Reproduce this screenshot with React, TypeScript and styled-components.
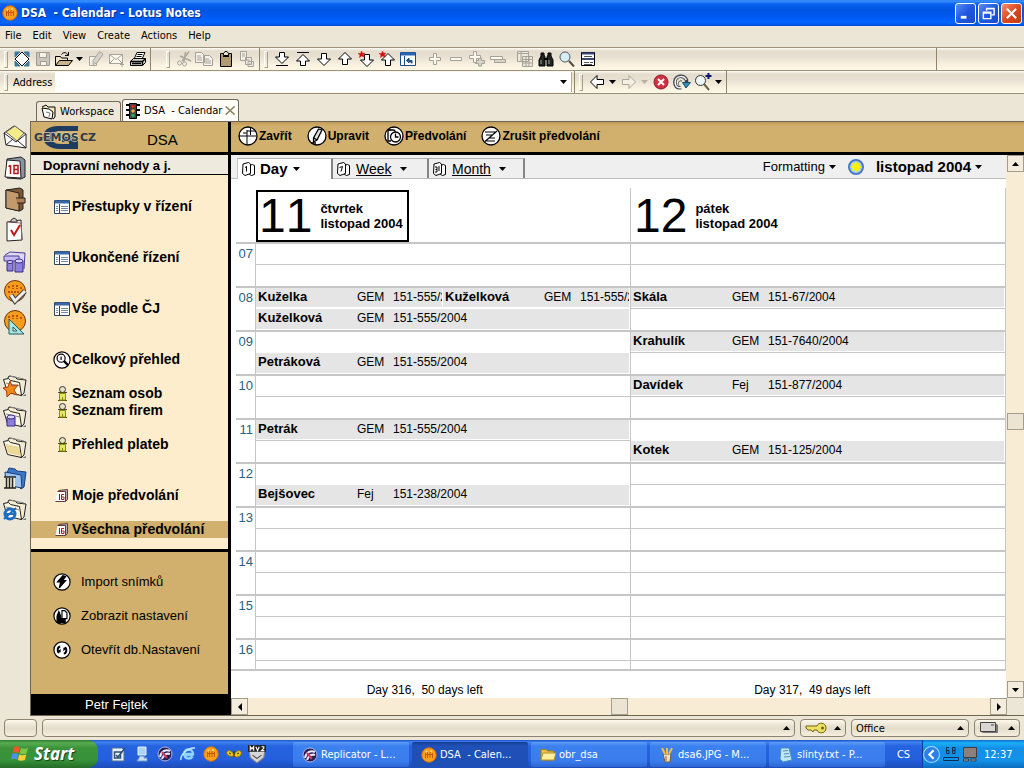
import React from "react";
import styled, { createGlobalStyle, css } from "styled-components";

const ui = `"DejaVu Sans Condensed", "Liberation Sans", sans-serif`;
const doc = `"Liberation Sans", Arial, sans-serif`;
const line = "#c6c6c6";
const tan = "#d1af6c";
const face = "#ece6d6";

const Global = createGlobalStyle`
  *, *::before, *::after { box-sizing: border-box; }
  body { margin: 0; background: ${face}; color: #000; font: 11px ${ui}; }
  button { border: 0; padding: 0; margin: 0; background: none; color: inherit; font: inherit; }
  a { color: inherit; text-decoration: none; }
  ul { list-style: none; margin: 0; padding: 0; }
  svg { display: block; flex: none; }
`;

const Shell = styled.div`
  display: flex;
  flex-direction: column;
  height: 100vh;
  overflow: hidden;
  white-space: pre;
`;

/* ---------- title bar and menu ---------- */

const TitleBar = styled.header`
  display: flex;
  align-items: center;
  flex: none;
  height: 26px;
  padding: 0 2px;
  gap: 3px;
  color: #fff;
  background: linear-gradient(#2a7df5 0, #3a92ff 1px, #0a63ee 4px, #0054e3 10px, #0058f0 16px, #0066ff 22px, #0050e0 26px);
`;
const Title = styled.h1`
  flex: 1;
  margin: 0;
  font: bold 12px/20px "DejaVu Sans Condensed", sans-serif;
  text-shadow: 1px 1px 0 #0a2f8c;
`;
const WindowButton = styled.button<{ $close?: boolean }>`
  display: grid;
  place-items: center;
  width: 21px;
  height: 21px;
  border: 1px solid #fff;
  border-radius: 3px;
  background: ${(p) => (p.$close ? "linear-gradient(135deg, #f09070, #dc4a20 50%, #c23a10)" : "linear-gradient(135deg, #5b8cf5, #2058e0 50%, #1a4acb)")};
`;
const WindowButtons = styled.div`
  display: flex;
  gap: 2px;
`;
const Menu = styled.nav`
  display: flex;
  align-items: center;
  flex: none;
  height: 21px;
  gap: 11px;
  padding: 0 5px 2px;
`;

/* ---------- toolbars ---------- */

const Bar = styled.div`
  display: flex;
  flex: none;
  height: 23px;
  border-top: 1px solid #9b917c;
  background: linear-gradient(#fffdf5 0, #e4dccd 3px, #e8e1d2 9px, #fbf4e2 18px, #fdf7e6);
`;
const BarGroup = styled.div<{ $lead?: number; $grow?: boolean }>`
  display: flex;
  align-items: center;
  flex: ${(p) => (p.$grow ? "1" : "none")};
  padding-left: ${(p) => p.$lead ?? 4}px;
  padding-right: 2px;
  border-right: 1px solid #8f8468;
`;
const Grip = styled.i`
  width: 4px;
  height: 17px;
  margin-right: 3px;
  border: 1px solid;
  border-color: #fff #a99f88 #a99f88 #fff;
`;
const ToolButton = styled.button<{ $narrow?: boolean }>`
  display: grid;
  place-items: center;
  flex: none;
  width: ${(p) => (p.$narrow ? 11 : 21)}px;
  height: 21px;
`;
const Gap = styled.i`
  flex: none;
  width: 6px;
`;
const BarEnd = styled.div`
  flex: none;
  width: 87px;
`;
const AddressGroup = styled(BarGroup)`
  flex: 0 1 575px;
`;
const AddressLabel = styled.label`
  padding: 0 3px 0 2px;
`;
const AddressInput = styled.input`
  flex: 1;
  min-width: 0;
  height: 20px;
  border: 0;
  padding: 0 4px;
  background: #fff;
  font: 11px ${ui};
`;
const AddressDrop = styled.button`
  display: grid;
  place-items: center;
  width: 17px;
  height: 20px;
  background: #fff;
  border-right: 1px solid #b9ae94;
`;

/* ---------- window tabs ---------- */

const Tabs = styled.div`
  display: flex;
  align-items: flex-end;
  flex: none;
  height: 28px;
  padding-left: 36px;
  border-top: 1px solid #9b917c;
  gap: 1px;
`;
const Tab = styled.button<{ $on?: boolean }>`
  display: flex;
  align-items: center;
  gap: 3px;
  height: ${(p) => (p.$on ? 22 : 20)}px;
  padding: ${(p) => (p.$on ? "0 2px" : "0 6px 0 4px")};
  border: 1px solid #6f6a5e;
  border-bottom: 0;
  border-radius: 3px 3px 0 0;
  background: ${(p) => (p.$on ? "#fffdf8" : "#efe8d8")};
`;

/* ---------- body ---------- */

const Body = styled.div`
  display: flex;
  flex: 1;
  min-height: 0;
`;
const Bookmarks = styled.nav`
  display: flex;
  flex-direction: column;
  flex: none;
  width: 30px;
`;
const Bookmark = styled.button<{ $apart?: boolean }>`
  display: grid;
  place-items: center;
  flex: none;
  width: 29px;
  height: 31px;
  margin-top: ${(p) => (p.$apart ? 31 : 0)}px;
`;
const Frame = styled.div`
  display: flex;
  flex: 1;
  min-width: 0;
  border: 1px solid #6f664f;
  border-right: 0;
  font-family: ${doc};
`;

/* ---------- navigator ---------- */

const Navigator = styled.aside`
  display: flex;
  flex-direction: column;
  flex: none;
  width: 200px;
  border-right: 3px solid #000;
  background: #feedcd;
`;
const Brand = styled.div`
  display: flex;
  align-items: center;
  gap: 48px;
  flex: none;
  height: 33px;
  padding-left: 3px;
  border-bottom: 3px solid #000;
  background: ${tan};
  font-size: 15px;
`;
const BrandName = styled.span`
  padding-top: 5px;
`;
const NavTitle = styled.h2`
  flex: none;
  height: 20px;
  margin: 0;
  padding-left: 12px;
  border-bottom: 1px solid #000;
  background: #eeeade;
  font: bold 13px/21px ${doc};
`;
const NavList = styled.ul`
  flex: 1;
  padding-top: 23px;
`;
const NavItem = styled.li<{ $skip: number; $on?: boolean }>`
  height: 17px;
  margin-top: ${(p) => p.$skip * 17}px;
  background: ${(p) => (p.$on ? tan : "transparent")};
`;
const NavLink = styled.a<{ $plain?: boolean }>`
  display: flex;
  align-items: center;
  gap: ${(p) => (p.$plain ? 10 : 1)}px;
  height: 17px;
  padding-left: 22px;
  font: ${(p) => (p.$plain ? "13px" : "bold 14px")}/17px ${doc};
`;
const NavIcon = styled.span`
  display: grid;
  place-items: center;
  width: 18px;
`;
const Tools = styled.ul`
  display: flex;
  flex-direction: column;
  flex: none;
  gap: 17px;
  height: 145px;
  padding-top: 21px;
  border-top: 3px solid #000;
  background: ${tan};
`;
const User = styled.div`
  flex: none;
  height: 21px;
  padding-left: 54px;
  background: #000;
  color: #fff;
  font: 13px/22px ${doc};
`;

/* ---------- calendar ---------- */

const Calendar = styled.main`
  display: flex;
  flex-direction: column;
  flex: 1;
  min-width: 0;
  background: #fff;
`;
const Actions = styled.div`
  display: flex;
  align-items: center;
  flex: none;
  gap: 15px;
  height: 33px;
  padding: 0 7px 3px;
  border-bottom: 3px solid #000;
  background: linear-gradient(#c09a58, ${tan} 4px);
`;
const Action = styled.button`
  display: flex;
  align-items: center;
  gap: 1px;
  font: bold 12px/16px ${doc};
`;
const Scrolled = styled.div`
  display: flex;
  flex: 1;
  min-height: 0;
`;
const View = styled.div`
  display: flex;
  flex-direction: column;
  flex: 1;
  min-width: 0;
`;
const ViewBar = styled.div`
  display: flex;
  flex: none;
  height: 24px;
  padding: 3px 24px 0 6px;
  border-bottom: 1px solid #bdbdbd;
  background: #efefef;
  font-size: 14px;
`;
const ViewTab = styled.button<{ $on?: boolean }>`
  display: flex;
  align-items: center;
  gap: 6px;
  width: 96px;
  padding-left: 4px;
  border-top: 1px solid #b0b0b0;
  border-right: 2px solid #858585;
  font: ${(p) => (p.$on ? "bold 15px" : "14px")}/20px ${doc};
  ${(p) =>
    p.$on
      ? css`
          gap: 5px;
          height: 21px;
          border-left: 1px solid #c6c6c6;
          background: #fff;
        `
      : css`
          span { text-decoration: underline; margin-right: 2px; }
        `}
`;
const ViewSpace = styled.div`
  flex: 1;
`;
const ViewMenu = styled.button<{ $bold?: boolean }>`
  display: flex;
  align-items: center;
  gap: 4px;
  height: 18px;
  margin-left: 12px;
  font: ${(p) => (p.$bold ? "bold 15px" : "13px")}/18px ${doc};
`;
const Days = styled.div`
  display: flex;
  flex: 1;
  min-height: 0;
  padding-left: 5px;
  border-bottom: 2px solid ${line};
`;
const Hours = styled.div`
  flex: none;
  width: 20px;
  padding-top: 63px;
  overflow: hidden;
`;
const Hour = styled.div`
  height: 44px;
  border-top: 2px solid ${line};
  border-right: 1px solid ${line};
  color: #2d5f80;
  text-align: right;
  padding-right: 2px;
  font: 13px/19px ${doc};
`;
const Day = styled.section`
  display: flex;
  flex-direction: column;
  flex: 1;
  min-width: 0;
  overflow: hidden;
`;
const DayHead = styled.div`
  flex: none;
  height: 54px;
  margin-top: 9px;
  padding-top: 2px;
  border-right: 1px solid ${line};
`;
const DayBox = styled.div<{ $today?: boolean }>`
  display: inline-flex;
  align-items: center;
  gap: 8px;
  height: 52px;
  padding: 0 4px 0 1px;
  border: 2px solid ${(p) => (p.$today ? "#000" : "transparent")};
`;
const DayNumber = styled.span`
  font: 48px/48px ${doc};
  font-kerning: none;
`;
const DayName = styled.span`
  font: bold 13px/15px ${doc};
`;
const Slots = styled.div`
  flex: 1;
  min-height: 0;
  overflow: hidden;
  border-right: 1px solid ${line};
`;
const Slot = styled.div<{ $half: boolean; $busy: boolean }>`
  display: flex;
  height: 22px;
  border-top: ${(p) => (p.$half ? 1 : 2)}px solid ${(p) => (p.$half && p.$busy ? "#fff" : line)};
  padding-bottom: 1px;
`;
const Entry = styled.a`
  display: grid;
  grid-template-columns: 99px 36px 1fr;
  flex: 1 1 0;
  min-width: 0;
  margin-right: 1px;
  padding-left: 2px;
  overflow: hidden;
  background: #e5e5e5;
  font: 12px/18px ${doc};
  b { font-size: 13px; }
`;
const Counts = styled.div`
  display: flex;
  flex: none;
  height: 27px;
  padding-top: 7px;
  text-align: center;
  font: 12px/24px ${doc};
`;
const Count = styled.div`
  flex: 1;
`;

/* ---------- scroll bars ---------- */

const Track = styled.div<{ $row?: boolean }>`
  display: flex;
  flex: none;
  flex-direction: ${(p) => (p.$row ? "row" : "column")};
  ${(p) => (p.$row ? "height: 17px; padding-right: 17px;" : "width: 18px; padding-left: 1px;")}
  background: ${(p) => (p.$row ? `linear-gradient(${face}, ${face}) right / 18px 100% no-repeat,` : "")} #f9ecd4;
`;
const ScrollButton = styled.button`
  display: grid;
  place-items: center;
  flex: none;
  width: 17px;
  height: 17px;
  border: 1px solid #a39d8c;
  background: #f4ecdc;
`;
const Thumb = styled.div`
  flex: none;
  width: 17px;
  height: 17px;
  border: 1px solid #a39d8c;
  background: #ebe4d3;
`;
const Run = styled.div<{ $share?: number }>`
  flex: ${(p) => p.$share ?? 25} 1 0;
`;

/* ---------- status bar ---------- */

const Status = styled.footer`
  display: flex;
  align-items: center;
  flex: none;
  gap: 5px;
  height: 24px;
  padding: 0 4px;
`;
const StatusBox = styled.button<{ $w?: number }>`
  display: flex;
  align-items: center;
  justify-content: space-between;
  ${(p) => (p.$w ? `flex: none; width: ${p.$w}px;` : "flex: 1;")}
  height: 18px;
  padding: 0 4px;
  border: 1px solid #8d8370;
  border-radius: 4px;
  background: linear-gradient(#fdf8ea, #e3dbcb 50%, #f7efde);
`;

/* ---------- task bar ---------- */

const TaskBar = styled.footer`
  display: flex;
  flex: none;
  height: 28px;
  color: #fff;
  background: linear-gradient(#1c4fc4 0, #3f83f2 2px, #2663e0 6px, #245edb 20px, #1c4cb8 28px);
`;
const Start = styled.button`
  display: flex;
  align-items: center;
  gap: 5px;
  width: 98px;
  padding-left: 11px;
  border-radius: 0 10px 10px 0;
  background: linear-gradient(#2f7d2e 0, #58ac52 3px, #3b9339 8px, #37923a 20px, #256c28 28px);
  font: italic bold 17px/24px "Noto Sans", sans-serif;
  text-shadow: 1px 1px 1px #1b3f19;
`;
const Quick = styled.div`
  display: flex;
  align-items: center;
  width: 195px;
  padding-left: 9px;
`;
const QuickButton = styled.button`
  display: grid;
  place-items: center;
  width: 23px;
  height: 24px;
`;
const Tasks = styled.div`
  display: flex;
  flex: 1;
  min-width: 0;
  gap: 3px;
  padding: 2px 0 1px;
`;
const Task = styled.button<{ $on?: boolean }>`
  display: flex;
  align-items: center;
  gap: 3px;
  flex: 1 1 0;
  min-width: 0;
  padding-left: 9px;
  border-radius: 2px;
  overflow: hidden;
  background: ${(p) => (p.$on ? "linear-gradient(#153e94, #1e50b8 4px, #1d4fb5)" : "linear-gradient(#5f9cfa, #3c81f0 4px, #3a7cec 19px, #2c66d4)")};
`;
const Lang = styled.button`
  width: 37px;
`;
const Tray = styled.div`
  display: flex;
  align-items: center;
  gap: 3px;
  width: 102px;
  border-left: 1px solid #0b3f9c;
  background: linear-gradient(#0d6fd0, #19b0f5 3px, #1290e8 8px, #1392ea 20px, #0c6cc0);
`;
const Clock = styled.time`
  padding-left: 3px;
`;

/* ---------- drawings ---------- */

type Kids = { children: React.ReactNode; s?: number; v?: number };
const Pic = ({ children, s = 16, v = 16 }: Kids) => (
  <svg width={s} height={s} viewBox={`0 0 ${v} ${v}`} fill="none" stroke="#000" strokeWidth="1" aria-hidden="true">
    {children}
  </svg>
);
const Caret = ({ c = "#000", up }: { c?: string; up?: boolean }) => (
  <svg width="7" height="4" viewBox="0 0 7 4" fill={c} aria-hidden="true">
    <path d={up ? "M0 4 3.5 0 7 4z" : "M0 0h7L3.5 4z"} />
  </svg>
);
const Side = ({ left }: { left?: boolean }) => (
  <svg width="4" height="8" viewBox="0 0 4 8" aria-hidden="true">
    <path d={left ? "M4 0v8L0 4z" : "M0 0v8l4-4z"} />
  </svg>
);

const Notes = ({ s = 16 }: { s?: number }) => (
  <Pic s={s}>
    <circle cx="8" cy="8" r="7.2" fill="#f9a01c" stroke="#d9720c" />
    <path d="M4.5 6v5M6.5 5v6M9 5v6M11.5 6v5M4 7.5h8" stroke="#c8580a" />
    <circle cx="5.5" cy="4.5" r="1" fill="#ffd878" stroke="none" />
    <circle cx="10" cy="4" r="1" fill="#ffd878" stroke="none" />
  </Pic>
);

const arrowDown = "M5.5 2.5h5v5.5h4L8 14.5 1.500 8h4z";
const arrowUp = "M5.5 13.5h5V8h4L8 1.500 1.500 8h4z";
const star = <path d="m3.5 0 1 2.200L7 2 5.300 3.800 6.500 6 3.700 5 1.500 6.500 2 4 0 2.500h2.600z" fill="#d01010" stroke="#d01010" strokeWidth="0.5" />;

const icons: Record<string, React.ReactNode> = {
  diamond: (
    <Pic>
      <path d="M1 1h5L1 6zM15 1v5l-5-5zM1 15v-5l5 5zM15 15h-5l5-5z" fill="#3f7ca0" stroke="#3f7ca0" />
      <path d="M8 1 15 8 8 15 1 8z" fill="#fff" />
    </Pic>
  ),
  save: (
    <Pic>
      <path d="M1.5 1.5h13v13h-13z" fill="#c9c5bd" stroke="#a09c94" />
      <path d="M4.5 1.5h7v5h-7zM5.5 10.5h6v4h-6z" fill="#f6f2ea" stroke="#a09c94" />
    </Pic>
  ),
  open: (
    <svg width="20" height="16" viewBox="0 0 20 16" fill="none" stroke="#000" aria-hidden="true">
      <path d="M1.5 14.5v-9h5l1 1.5h6v3" fill="#f2e6c4" />
      <path d="M1.5 14.5 5.5 9.5h13l-4 5z" fill="#cbb48c" />
      <path d="M7.5 3.5c2-3 5-2 6.5.5M14.5 1v3.5h-3.5" />
    </svg>
  ),
  edit: (
    <Pic>
      <path d="M1.5 5.5h7v9h-7z" fill="#f7f3ea" stroke="#a8a49a" />
      <path d="M11.5.5 15 3l-6 9-4 1.500 0-4z" fill="#d5d1c8" stroke="#a8a49a" />
    </Pic>
  ),
  mail: (
    <Pic>
      <path d="M.5 3.5h13v9H.5z" fill="#fbf7ee" stroke="#a8a49a" />
      <path d="m.5 3.5 6.5 5 6.5-5M.5 12.5 5 8M13.5 12.5 9 8M11 13.5h4M13 11v5" stroke="#a8a49a" />
    </Pic>
  ),
  print: (
    <svg width="18" height="16" viewBox="0 0 18 16" fill="none" stroke="#000" aria-hidden="true">
      <path d="M5.5 7 8 1.5h8L13.5 7" fill="#fff" />
      <path d="M8.5 3.5h5M7.5 5.5h5" />
      <path d="M1.5 10.5 4.5 7.5h12v4l-3 3h-12z" fill="#d8d4c8" />
      <path d="M1.5 10.5h12v4M13.5 10.5l3-3M3 12.5h9" strokeWidth="1.5" />
    </svg>
  ),
  cut: (
    <Pic>
      <path d="M13 .5 6 10M4 5l11 5M9.5 1 8 11" stroke="#aaa69c" strokeWidth="1.5" />
      <circle cx="3.5" cy="12" r="2" stroke="#aaa69c" />
      <circle cx="8.5" cy="13" r="2" stroke="#aaa69c" />
    </Pic>
  ),
  copy: (
    <svg width="19" height="16" viewBox="0 0 19 16" fill="#f7f3ea" stroke="#a5a198" aria-hidden="true">
      <path d="M.5 1.5h6l3 3v7h-9zM8.5 4.5h6l3 3v7h-9z" />
      <path d="M2 5h4M2 7h5M2 9h5M10 8h4M10 10h6M10 12h6" />
    </svg>
  ),
  paste: (
    <Pic>
      <path d="M2.5 2.5h11v13h-11z" fill="#b09a74" />
      <path d="M5.5 4.5v-2l1.5-2h2l1.5 2v2z" fill="#e8e2d2" />
      <path d="M5 5.5h6" />
    </Pic>
  ),
  special: (
    <Pic>
      <path d="M1.5.5h6v9h-6zM6.5 6.5h6v7h-6zM9 10.5h5.5v5H9z" fill="#f2eee5" stroke="#a5a198" />
      <path d="M3 3h3M3 5h3M8 9h3M10 13h3" stroke="#a5a198" />
    </Pic>
  ),
  downEnd: <Pic><path d="M5.5 1.5h5V6h4L8 12.5 1.500 6h4z" fill="#fff" /><path d="M2 14.5h12" /></Pic>,
  upEnd: <Pic><path d="M5.5 14.5h5V10h4L8 3.500 1.500 10h4z" fill="#fff" /><path d="M2 1.5h12" /></Pic>,
  down: <Pic><path d={arrowDown} fill="#fff" /></Pic>,
  up: <Pic><path d={arrowUp} fill="#fff" /></Pic>,
  starDown: <Pic><g transform="translate(1 1)"><path d={arrowDown} fill="#fff" /></g>{star}</Pic>,
  starUp: <Pic><g transform="translate(1 1)"><path d={arrowUp} fill="#fff" /></g>{star}</Pic>,
  parent: (
    <Pic>
      <path d="M.5 1.5h15v13H.5z" fill="#fff" stroke="#1c4c8c" />
      <path d="M1 3h14" stroke="#2a66b0" strokeWidth="3" />
      <path d="M4.5 5v9" stroke="#1c4c8c" />
      <path d="M7 9.5h5v3M9 7 6.5 9.5 9 12z" fill="#1c4c8c" stroke="#1c4c8c" />
    </Pic>
  ),
  plus: <Pic><path d="M6.5 2.5h3v4h4v3h-4v4h-3v-4h-4v-3h4z" fill="#fffaf0" stroke="#a5a198" /></Pic>,
  minus: <Pic><path d="M2.5 6.5h11v3h-11z" fill="#fffaf0" stroke="#a5a198" /></Pic>,
  plusAll: (
    <Pic>
      <path d="M9.5 7v2.5h-3v3h3V15h3v-2.5h3v-3h-3V7z" fill="#d9d4c8" stroke="#a5a198" />
      <path d="M4.5.5h3v4h4v3h-4v4h-3v-4h-4v-3h4z" fill="#fffaf0" stroke="#a5a198" />
    </Pic>
  ),
  minusAll: (
    <Pic>
      <path d="M4.5 8.5h11v3h-11z" fill="#d9d4c8" stroke="#a5a198" />
      <path d="M.5 5.5h12v3H.5z" fill="#fffaf0" stroke="#a5a198" />
    </Pic>
  ),
  grid: (
    <Pic>
      <path d="M.5.5h11v10H.5zM5.5 5.5h10v10h-10z" fill="#efe9dc" stroke="#a5a198" />
      <path d="M.5 2.5h11M4 1v9M5.5 8.5h10M9 6v9M12 6v9M6 12h9" stroke="#a5a198" />
    </Pic>
  ),
  find: (
    <Pic>
      <path d="M3 2h3v2l1 2v9H1V9l2-4zM10 2h3v3l2 4v6H9V6l1-2z" fill="#222" />
      <path d="M6 8h4" strokeWidth="2" />
      <path d="M3 9v4M11 9v4" stroke="#8fae8f" />
    </Pic>
  ),
  lens: (
    <Pic>
      <circle cx="6" cy="6" r="5" fill="#d8ecf4" stroke="#4c5c68" />
      <path d="m10 10 5 5.5" stroke="#554c38" strokeWidth="2" />
    </Pic>
  ),
  form: (
    <Pic>
      <path d="M1.5 1.5h13v13h-13z" fill="#fff" />
      <path d="M2 2.500h12M2 8h12" stroke="#3a4a80" strokeWidth="2" />
      <path d="M4 5.5h8M4 11.500h5M10 11.500h3M4 13.500h8" stroke="#555" />
    </Pic>
  ),
  back: <Pic><path d="M1.5 8 8 1.5v4h6.500v5H8v4z" fill="#fff" /></Pic>,
  forward: <Pic><path d="M14.5 8 8 1.5v4H1.500v5H8v4z" fill="#f4f0e4" stroke="#aaa69a" /></Pic>,
  stop: <Pic><circle cx="8" cy="8" r="7" fill="#d03040" stroke="#8c1c2c" /><path d="m5 5 6 6M11 5l-6 6" stroke="#fff" strokeWidth="2" /></Pic>,
  reload: (
    <svg width="18" height="16" viewBox="0 0 18 16" fill="none" aria-hidden="true">
      <path d="M8 13.5C3.5 15 1.5 11 2 7.5 3 1 11 .5 13.5 6v3" stroke="#39424c" strokeWidth="3.5" />
      <path d="M8 13.5C3.5 14.5 1.7 11 2.2 7.5 3 1.5 11 1 13.3 6" stroke="#f4f4f4" strokeWidth="1.5" />
      <path d="M9.5 8.5h8L13 14z" fill="#2e8fc0" stroke="#1c4c6c" />
      <path d="M6 11.5C4.5 9 6 6 9 7" stroke="#555" />
    </svg>
  ),
  searchPlus: (
    <svg width="18" height="18" viewBox="0 0 18 18" fill="none" aria-hidden="true">
      <circle cx="6.5" cy="7.5" r="5" fill="#eef6f8" stroke="#333" />
      <path d="m10 11 5 6" stroke="#6b6248" strokeWidth="2" />
      <path d="M14.5 0v6M11.5 3h6" stroke="#101070" strokeWidth="2" />
    </svg>
  ),
};

const folderBack = (
  <g>
    <path d="M5 8 7 4l6 1 2 2 9 1-2 13-3 3z" fill="#f4ecd0" stroke="#222" />
    <path d="m1.5 7.5 5-1 2 2 9 2 2 13-14-3z" fill="#fdf8e4" stroke="#222" />
    <path d="m4 11 14 3M8 4l14 3" stroke="#888" />
    <path d="m20 24 4-2v2z" fill="#777" stroke="none" />
  </g>
);
const marks: { name: string; apart?: boolean; pic: React.ReactNode }[] = [
  { name: "Mail", pic: <><path d="M2 9 12 2l12 8v14L4 21z" fill="#fff" stroke="#222" /><path d="m4 8 9-6 9 7-7 8z" fill="#f3ec88" stroke="#666" /><path d="m2 9 12 9 10-8M4 21l7-6M24 24l-8-7" stroke="#222" /></> },
  { name: "Calendar", pic: <><path d="m5 4 14-2 4 3v17l-4 2-14-1z" fill="#8a94a0" stroke="#222" /><path d="m5 5 13 1 1 17-16-1z" fill="#fff" stroke="#222" /><path d="M8.500 10v9M6.500 11.500l2-1M12 10.500h4v8h-4zM12 14.500h4" stroke="#b01818" strokeWidth="1.5" /></> },
  { name: "Address book", pic: <><path d="m4 4 14-2 3 2v19l-3 2-14-3z" fill="#7c5a38" stroke="#222" /><path d="m4 4 13 3v18L4 22z" fill="#c49a6c" stroke="#222" /><path d="M14 12h9v5h-8" fill="#b08050" stroke="#222" /></> },
  { name: "To do", pic: <><path d="m5 5 14-2 1 20-15 1z" fill="#fff" stroke="#222" /><path d="m5 5 14 1 1 17" stroke="#a06060" /><path d="M9 5V3l3-2 3 2v2z" fill="#c8c8c8" stroke="#333" /><path d="m9 13 3 5 6-10" stroke="#c01818" strokeWidth="2" /></> },
  { name: "Databases", pic: <><path d="M3 7 8 4l15 1-1 16" fill="#ddd8f4" stroke="#4c3c98" /><path d="M2 8h15v5H2z" fill="#c4bcf0" stroke="#4c3c98" /><path d="M5 14h6v9H5zM13 13h8v11h-8z" fill="#8c80dc" stroke="#3a2c88" /><ellipse cx="8" cy="14" rx="3" ry="1.5" fill="#d8d0f8" stroke="#3a2c88" /><ellipse cx="17" cy="13" rx="4" ry="2" fill="#d8d0f8" stroke="#3a2c88" /></> },
  { name: "Administrator", pic: <><circle cx="13" cy="12" r="10.5" fill="#f79c1c" stroke="#6c3408" /><path d="M7 7v3M11 6v4M15 6v4M19 8v3M6 13h12" stroke="#b85408" strokeWidth="2" strokeDasharray="2 1" /><path d="m9 16 4 6L23 12" stroke="#444" strokeWidth="5" /><path d="m9 16 4 6L23 12" stroke="#eee" strokeWidth="3" /></> },
  { name: "Designer", pic: <><circle cx="13" cy="11" r="10.5" fill="#f79c1c" stroke="#6c3408" /><path d="M7 6v3M11 5v4M15 5v4M19 7v3" stroke="#b85408" strokeWidth="2" strokeDasharray="2 1" /><path d="M7 9v15h15z" fill="#a8e4dc" stroke="#1c5c5c" /><path d="M11 17v4h4z" fill="#fff" stroke="#1c5c5c" /></> },
  { name: "Favorites", apart: true, pic: <>{folderBack}<path d="m8 9 2 5 6-1-4 5 3 5-6-2-4 4-.5-6L1 16l5-1z" fill="#f08a1c" stroke="#b03c08" /></> },
  { name: "Database folder", pic: <>{folderBack}<path d="M5 14h8v9H5z" fill="#8c80dc" stroke="#3a2c88" /><ellipse cx="9" cy="14" rx="4" ry="2" fill="#d8d0f8" stroke="#3a2c88" /></> },
  { name: "More bookmarks", pic: <>{folderBack}<path d="m3 10 14 3 2 9-13-3z" fill="#ecd898" stroke="none" /></> },
  { name: "History", pic: <><path d="M5 8 7 3l6 1 2 2 9 1-2 15-3 2z" fill="#3c78c8" stroke="#1c3c78" /><path d="m3 7 16 3 1 13-16-3z" fill="#9cc4f0" stroke="#1c3c78" /><path d="M3 12h10v11H3z" fill="#f4ecd8" stroke="none" /><path d="M2 12h12M2 23h12M4.5 13v10M7.5 13v10M10.5 13v10" stroke="#222" strokeWidth="1.5" /></> },
  { name: "Internet Explorer", pic: <>{folderBack}<circle cx="8" cy="18" r="5" fill="#fff" stroke="#1c6cc0" strokeWidth="3" /><path d="M4 18h9M2 23 14 12" stroke="#1c6cc0" strokeWidth="2" /></> },
];

const ListIcon = () => (
  <svg width="16" height="14" viewBox="0 0 16 14" fill="none" aria-hidden="true">
    <path d="M.5.5h15v13H.5z" fill="#fff" stroke="#2c4460" />
    <path d="M1 2h14" stroke="#3868a8" strokeWidth="3" />
    <path d="M5.5 4v9" stroke="#2c4460" />
    <path d="M2 6.500h2M2 8.500h2M2 10.500h2M7 6.500h7M7 8.500h7M7 10.500h7" stroke="#7888a0" />
  </svg>
);
const Person = () => (
  <svg width="11" height="15" viewBox="0 0 11 15" fill="none" stroke="#4c4c10" aria-hidden="true">
    <circle cx="5.5" cy="3.5" r="3" fill="#e8e4c0" stroke="#333" />
    <path d="M1 6.5h9M1 14.5h9" />
    <path d="M2.5 7.5h6v6.5h-6z" fill="#e4e860" stroke="#8c8c10" />
    <path d="M5.500 11v3" stroke="#8c8c10" />
  </svg>
);
const Cal16 = () => (
  <svg width="14" height="13" viewBox="0 0 14 13" fill="none" aria-hidden="true">
    <path d="M3.5 1.5 12.500.5v10l-2 2" fill="#b8a8a8" stroke="#5c3c3c" />
    <path d="M2.5 2.5h8v10H.5" fill="#fff" stroke="#5c3c3c" />
    <path d="M4.5 5v6M9 5.500H6.500V10.500H9V8H6.500" stroke="#b01818" />
  </svg>
);
const Round = ({ children, s = 18 }: { children: React.ReactNode; s?: number }) => (
  <svg width={s} height={s} viewBox="0 0 20 20" fill="none" stroke="#000" strokeWidth="1.3" aria-hidden="true">
    <circle cx="10" cy="10" r="9" fill="#fff" />
    {children}
  </svg>
);
const Pages = ({ n }: { n: string }) => (
  <svg width="13" height="14" viewBox="0 0 13 14" fill="#fff" stroke="#000" aria-hidden="true">
    <path d="M7.5 3.500 10.500 2.500l2 1v9l-3 1-2-1z" />
    <path d="M1 2 6.500.5 8.500 2v9.500L3 13.500.5 11.500z" />
    <path d={n} fill="none" />
  </svg>
);

/* ---------- data ---------- */

const nav: { text: string; skip: number; pic: React.ReactNode; on?: boolean }[] = [
  { text: "Přestupky v řízení", skip: 0, pic: <ListIcon /> },
  { text: "Ukončené řízení", skip: 2, pic: <ListIcon /> },
  { text: "Vše podle ČJ", skip: 2, pic: <ListIcon /> },
  { text: "Celkový přehled", skip: 2, pic: <Round><circle cx="9" cy="8" r="4.5" /><path d="m12 11 5 5" strokeWidth="2.5" /><path d="M9 6v4" /></Round> },
  { text: "Seznam osob", skip: 1, pic: <Person /> },
  { text: "Seznam firem", skip: 0, pic: <Person /> },
  { text: "Přehled plateb", skip: 1, pic: <Person /> },
  { text: "Moje předvolání", skip: 2, pic: <Cal16 /> },
  { text: "Všechna předvolání", skip: 1, pic: <Cal16 />, on: true },
];

const tools = [
  { text: "Import snímků", pic: <Round><path d="m11 3-6 7h3.5L7 16.5l7-8h-3.5L14 4z" fill="#000" /></Round> },
  { text: "Zobrazit nastavení", pic: <Round><path d="M4.500 16V10l2-5 2 5v3h5v4h-9z" fill="#000" /><path d="M10 4h3l2.500 2.500V13H10z" fill="#fff" /></Round> },
  { text: "Otevřít db.Nastavení", pic: <Round><path d="M8 6C4.5 6.5 4.5 12 7 13M12 14c3.5-.5 3.5-6 1-7" strokeWidth="2.2" /><path d="M4.5 12.5h4v-4zM15.5 7.5h-4v4z" fill="#000" stroke="none" /></Round> },
];

const actions = [
  { text: "Zavřít", pic: <Round s={20}><path d="M1 10h8M9 5h9M12.500 2v7M5 7h4M9 10h9M9 10v8M9 4v6" strokeWidth="1" /></Round> },
  { text: "Upravit", pic: <Round s={20}><path d="m11.500 3 3.500 1-5 10-3.500 2v-4z" fill="#ddd" /><path d="m7 12 3 2M4 17h5" /></Round> },
  { text: "Předvolání", pic: <Round s={20}><path d="M4 4h6l1.500 2M4 4v11h3M6 3v2" /><circle cx="11.5" cy="11" r="5" fill="#fff" /><path d="M11.5 7.5V11h3" /></Round> },
  { text: "Zrušit předvolání", pic: <Round s={20}><path d="M4 6h11M5 9h7M8 12h6M5 15h9M16 5 4 15.500" strokeWidth="1.1" /></Round> },
];

type Item = [string, string, string];
const days: { num: string; name: string; today?: boolean; slots: Record<number, Item[]> }[] = [
  {
    num: "11",
    name: "čtvrtek",
    today: true,
    slots: {
      2: [["Kuželka", "GEM", "151-555/2004"], ["Kuželková", "GEM", "151-555/2004"]],
      3: [["Kuželková", "GEM", "151-555/2004"]],
      5: [["Petráková", "GEM", "151-555/2004"]],
      8: [["Petrák", "GEM", "151-555/2004"]],
      11: [["Bejšovec", "Fej", "151-238/2004"]],
    },
  },
  {
    num: "12",
    name: "pátek",
    slots: {
      2: [["Skála", "GEM", "151-67/2004"]],
      4: [["Krahulík", "GEM", "151-7640/2004"]],
      6: [["Davídek", "Fej", "151-877/2004"]],
      9: [["Kotek", "GEM", "151-125/2004"]],
    },
  },
];
const hours = ["07", "08", "09", "10", "11", "12", "13", "14", "15", "16"];

const Replicator = () => (
  <Pic>
    <circle cx="8" cy="8" r="7" fill="#241c54" stroke="#b8b8e0" />
    <path d="M3 11C4 5 9 3 13 5M5 13c2-5 5-6 8-5" stroke="#e8e8ff" strokeWidth="2" />
    <path d="m5 6 5 6" stroke="#c83c5c" strokeWidth="2" />
  </Pic>
);
const NoteFile = () => (
  <Pic><path d="M3 1h8l3 12-9 2-3-3z" fill="#bfe6f4" stroke="#4c90b8" /><path d="m5 4 5-.5M6 7l5-.5M6 10l6-.5" stroke="#4c90b8" /></Pic>
);
const quick: [string, React.ReactNode][] = [
  ["Show desktop", <Pic><path d="M1 2h10l2 2v11H1z" fill="#e8f0f8" stroke="#4c7098" /><path d="M3.5 6h6v6h-6zM5 9l2 2 7-9" stroke="#2c5078" strokeWidth="1.5" /></Pic>],
  ["Computer", <Pic><path d="M4 1h8v8H4z" fill="#a8d4fc" stroke="#e8f4ff" /><path d="M6 10h4v2h3v3H3l2-3z" fill="#cfe0f0" stroke="#6c98c8" /></Pic>],
  ["Replication", <Replicator />],
  ["Internet Explorer", <Pic><path d="M13.5 9h-9c.5 4 6 4.5 8 1.5M4 8c0-6 9-6 9 0z" stroke="#8cd4fc" strokeWidth="2.5" /><path d="M1 14C0 9 8 1 15 2" stroke="#bce8ff" strokeWidth="1.5" /></Pic>],
  ["Lotus Notes", <Notes />],
  ["Butterfly", <Pic><path d="M8 9C5 3 1 4 .5 7c1 3 4 4 7 3 4 2 7 1 8-3-.5-3-4.5-4-7.5 2z" fill="#e8c820" stroke="#8c6c08" /><path d="m3 7 2 1M13 7l-2 1M8 5v6" stroke="#3c2c04" /></Pic>],
  ["MV2", <Pic s={18}><path d="M1 5h14l-1 6-6 5-6-5z" fill="#d8d8d8" stroke="#888" /><path d="M0 0h16v6H0z" fill="#222" stroke="none" /><path d="M2 5V1.5l1.5 2 1.5-2V5M7 1.5 8.5 5 10 1.5M12 1.5h2v1.5l-2 2h2.5" stroke="#fff" /><path d="m4 9 4 3 4-3" stroke="#555" /></Pic>],
];
const tasks: { text: string; pic: React.ReactNode; on?: boolean }[] = [
  { text: "Replicator - L...", pic: <Replicator /> },
  { text: "DSA  - Calen...", pic: <Notes />, on: true },
  { text: "obr_dsa", pic: <Pic><path d="M1 4V2.5h5L7.5 4H14v9H1z" fill="#e8c44c" stroke="#a07c14" /><path d="M1 13 3 6h13l-2 7z" fill="#fdf0a0" stroke="#b89020" /></Pic> },
  { text: "dsa6.JPG - M...", pic: <Pic><path d="M4 7h8l-1 8H6z" fill="#e8e0c8" stroke="#705c3c" /><path d="M6 7 3 1M8 7V1M10 7l3-6" stroke="#f0c040" strokeWidth="2" /><path d="M7 9v5" stroke="#c04c2c" /></Pic> },
  { text: "slinty.txt - P...", pic: <NoteFile /> },
];

const tool = (name: string, label: string) => (
  <ToolButton key={name} aria-label={label}>{icons[name]}</ToolButton>
);

export default function App() {
  return (
    <Shell>
      <Global />
      <TitleBar>
        <Notes />
        <Title>DSA  - Calendar - Lotus Notes</Title>
        <WindowButtons>
          <WindowButton aria-label="Minimize"><Pic s={15}><path d="M3 12h6" stroke="#fff" strokeWidth="3" /></Pic></WindowButton>
          <WindowButton aria-label="Restore"><Pic s={15}><path d="M6 5V2.5h8v7h-3M6 3h8" stroke="#fff" strokeWidth="1.5" /><path d="M2.5 6.5h8v7h-8zM2.5 7.5h8" stroke="#fff" strokeWidth="1.5" /></Pic></WindowButton>
          <WindowButton $close aria-label="Close"><Pic s={15}><path d="m3 3 10 10M13 3 3 13" stroke="#fff" strokeWidth="2.2" /></Pic></WindowButton>
        </WindowButtons>
      </TitleBar>
      <Menu>
        {["File", "Edit", "View", "Create", "Actions", "Help"].map((m) => <button key={m}>{m}</button>)}
      </Menu>

      <Bar>
        <BarGroup>
          <Grip />
          {tool("diamond", "Properties")}
          {tool("save", "Save")}
          {tool("open", "Open")}
          <ToolButton $narrow aria-label="Open menu"><Caret /></ToolButton>
          {tool("edit", "Edit")}
          {tool("mail", "Send")}
          {tool("print", "Print")}
        </BarGroup>
        <BarGroup $lead={15}>
          <Grip />
          {tool("cut", "Cut")}
          {tool("copy", "Copy")}
          {tool("paste", "Paste")}
          {tool("special", "Paste special")}
        </BarGroup>
        <BarGroup $grow>
          <Grip />
          {tool("downEnd", "Last")}
          {tool("upEnd", "First")}
          {tool("down", "Next")}
          {tool("up", "Previous")}
          {tool("starDown", "Next unread")}
          {tool("starUp", "Previous unread")}
          {tool("parent", "Parent")}
          <Gap />
          {tool("plus", "Expand")}
          {tool("minus", "Collapse")}
          {tool("plusAll", "Expand all")}
          {tool("minusAll", "Collapse all")}
          <Gap />
          {tool("grid", "Copy as table")}
          {tool("find", "Find")}
          {tool("lens", "Search")}
          {tool("form", "Discover")}
        </BarGroup>
        <BarEnd />
      </Bar>
      <Bar>
        <AddressGroup>
          <Grip />
          <AddressLabel htmlFor="address">Address</AddressLabel>
          <AddressInput id="address" />
          <AddressDrop aria-label="Address history"><Caret /></AddressDrop>
        </AddressGroup>
        <BarGroup>
          <Grip />
          {tool("back", "Back")}
          <ToolButton $narrow aria-label="Back history"><Caret /></ToolButton>
          {tool("forward", "Forward")}
          <ToolButton $narrow aria-label="Forward history"><Caret c="#b5b1a5" /></ToolButton>
          {tool("stop", "Stop")}
          {tool("reload", "Refresh")}
          {tool("searchPlus", "Search")}
          <ToolButton $narrow aria-label="Search options"><Caret /></ToolButton>
        </BarGroup>
      </Bar>

      <Tabs>
        <Tab>
          <Pic><path d="m1 3 4-2 2 2h7v10l-2 2" fill="#f4e8c0" /><path d="m1 4 7 1 4 3-1 7-8-2z" fill="#fff" /><path d="m5 8 4 1-1 4" stroke="#777" /></Pic>
          Workspace
        </Tab>
        <Tab $on>
          <Pic><path d="M4.5.5h7v15h-7z" fill="#444" /><path d="M1 2h3M1 7h3M1 12h3M12 2h3M12 7h3M12 12h3" strokeWidth="2" /><circle cx="8" cy="3.5" r="1.8" fill="#e02020" stroke="none" /><circle cx="8" cy="8" r="1.8" fill="#e8b030" stroke="none" /><circle cx="8" cy="12.5" r="1.8" fill="#20b050" stroke="none" /></Pic>
          DSA  - Calendar
          <Pic s={11}><path d="m1 2 13 12M14 2 1 14" stroke="#8c8464" strokeWidth="2" /></Pic>
        </Tab>
      </Tabs>

      <Body>
        <Bookmarks aria-label="Bookmarks">
          {marks.map((m) => (
            <Bookmark key={m.name} $apart={m.apart} aria-label={m.name}>
              <Pic s={26} v={26}>{m.pic}</Pic>
            </Bookmark>
          ))}
        </Bookmarks>
        <Frame>
          <Navigator>
            <Brand>
              <svg width="65" height="28" viewBox="0 0 65 28" role="img" aria-label="GEMOS CZ">
                <path d="M44 3H24C14 3 9 8 9 14s6 12 17 12h18V14H28v5h7v2h-9c-6 0-8-3-8-7s3-6 8-6h18z" fill="#1f3c60" />
                <g fontFamily="DejaVu Sans, sans-serif" fontSize="11" fontWeight="bold">
                  <text x="0" y="18" fill="#2f3b48">G</text>
                  <text x="9" y="18" fill="#2f3b48" stroke="#d8cba8" strokeWidth="1.4" paintOrder="stroke">EMOS</text>
                  <text x="46" y="18" fill="#2f3b48">CZ</text>
                </g>
              </svg>
              <BrandName>DSA</BrandName>
            </Brand>
            <NavTitle>Dopravní nehody a j.</NavTitle>
            <NavList>
              {nav.map((n) => (
                <NavItem key={n.text} $skip={n.skip} $on={n.on}>
                  <NavLink href="#"><NavIcon>{n.pic}</NavIcon>{n.text}</NavLink>
                </NavItem>
              ))}
            </NavList>
            <Tools>
              {tools.map((t) => (
                <li key={t.text}>
                  <NavLink $plain href="#"><NavIcon>{t.pic}</NavIcon>{t.text}</NavLink>
                </li>
              ))}
            </Tools>
            <User>Petr Fejtek</User>
          </Navigator>

          <Calendar>
            <Actions>
              {actions.map((a) => <Action key={a.text}>{a.pic}{a.text}</Action>)}
            </Actions>
            <Scrolled>
              <View>
                <ViewBar>
                  <ViewTab $on><Pages n="M3 5.5 4.5 4.500v5" /><span>Day</span><Caret /></ViewTab>
                  <ViewTab><Pages n="M2.5 5.500 5.500 4.500 4 9.500" /><span>Week</span><Caret /></ViewTab>
                  <ViewTab><Pages n="M2 5h2v2.500H2.500M4 7.500V10H2M6 4v5" /><span>Month</span><Caret /></ViewTab>
                  <ViewSpace />
                  <ViewMenu>Formatting<Caret /></ViewMenu>
                  <ViewMenu aria-label="Today">
                    <Pic><circle cx="8" cy="8" r="7" fill="#a8d0f0" stroke="#4878c8" strokeWidth="2" /><path d="m8 2 1.300 2.800 3-1-1.100 3L14 8l-2.800 1.200 1.100 3-3-1.100L8 14l-1.200-2.900-3 1.100 1.100-3L2 8l2.900-1.200-1.100-3 3 1z" fill="#fff200" stroke="none" /></Pic>
                  </ViewMenu>
                  <ViewMenu $bold>listopad 2004<Caret /></ViewMenu>
                </ViewBar>
                <Days>
                  <Hours>
                    {hours.map((h) => <Hour key={h}>{h}</Hour>)}
                  </Hours>
                  {days.map((d) => (
                    <Day key={d.num}>
                      <DayHead>
                        <DayBox $today={d.today}>
                          <DayNumber>{d.num}</DayNumber>
                          <DayName>{d.name}<br />listopad 2004</DayName>
                        </DayBox>
                      </DayHead>
                      <Slots>
                        {Array.from({ length: hours.length * 2 }, (_, i) => (
                          <Slot key={i} $half={i % 2 === 1} $busy={!!d.slots[i]}>
                            {d.slots[i]?.map(([who, by, ref]) => (
                              <Entry key={who} href="#"><b>{who}</b><span>{by}</span><span>{ref}</span></Entry>
                            ))}
                          </Slot>
                        ))}
                      </Slots>
                    </Day>
                  ))}
                </Days>
                <Counts>
                  <Count>Day 316,  50 days left</Count>
                  <Count>Day 317,  49 days left</Count>
                </Counts>
              </View>
              <Track>
                <ScrollButton aria-label="Scroll up"><Caret up /></ScrollButton>
                <Run $share={24} />
                <Thumb />
                <Run />
                <ScrollButton aria-label="Scroll down"><Caret /></ScrollButton>
              </Track>
            </Scrolled>
            <Track $row>
              <ScrollButton aria-label="Scroll left"><Side left /></ScrollButton>
              <Run />
              <Thumb />
              <Run />
              <ScrollButton aria-label="Scroll right"><Side /></ScrollButton>
            </Track>
          </Calendar>
        </Frame>
      </Body>

      <Status>
        <StatusBox $w={33} aria-label="Network" />
        <StatusBox aria-label="Messages"><span /><Caret up /></StatusBox>
        <StatusBox $w={46} aria-label="Access level">
          <svg width="22" height="12" viewBox="0 0 22 12" aria-hidden="true"><path d="M1 4h11c1-4 9-4 9 2s-8 6-9 2H9L8 10 6 8H3L1 6z" fill="#f0e060" stroke="#6c6418" /><circle cx="17.5" cy="6" r="1.5" fill="#6c6418" /></svg>
          <Caret up />
        </StatusBox>
        <StatusBox $w={118}>Office<Caret up /></StatusBox>
        <StatusBox $w={46} aria-label="Mail">
          <svg width="20" height="12" viewBox="0 0 20 12" aria-hidden="true"><path d="M1 1h15l3 2v8H4l-3-2z" fill="#777" /><path d="M1.5.5h15v9h-15z" fill="#d8d6d0" stroke="#444" /><path d="M12 3h3" stroke="#444" /></svg>
          <Caret up />
        </StatusBox>
      </Status>

      <TaskBar>
        <Start>
          <svg width="18" height="18" viewBox="0 0 18 18" aria-hidden="true">
            <path d="M3 2.500c3-2 4-1 6 0L7.500 8C5 7 4 7 1.500 8z" fill="#f0582c" />
            <path d="M10 3c2 1 4 1 7 0l-1.500 5.500c-3 1-5 1-7 0z" fill="#7cc840" />
            <path d="M1.300 9c3-1 4-1 6 0l-1.300 5.500c-2-1-4-1-6 0z" fill="#4c90f0" />
            <path d="M8.200 9.500c2 1 4 1 7 0L14 15c-3 1-5 1-7.200 0z" fill="#fcd034" />
          </svg>
          Start
        </Start>
        <Quick>
          {quick.map(([n, p]) => <QuickButton key={n} aria-label={n}>{p}</QuickButton>)}
        </Quick>
        <Tasks>
          {tasks.map((t) => <Task key={t.text} $on={t.on}>{t.pic}{t.text}</Task>)}
        </Tasks>
        <Lang>CS</Lang>
        <Tray>
          <Pic s={17}><circle cx="8" cy="8" r="7.5" fill="#2c80e8" stroke="#a8d8ff" /><path d="M10 4 6 8l4 4" stroke="#fff" strokeWidth="2" /></Pic>
          <svg width="16" height="16" viewBox="0 0 16 16" fill="none" stroke="#0c2c50" aria-hidden="true">
            <path d="M6 1.500H3.500v6H6v-3H3.500M9.500 1.500H12v6H9.500zM9.500 4.500H12" />
            <path d="M.5 11.500h15v3H.5z" />
          </svg>
          <Pic><path d="M1.5 1.500h13v10h-13z" fill="#8c8078" stroke="#3c3c44" /><path d="M1.5 13h5v2h-5zM9 13h5v2H9z" fill="#aaa" stroke="#3c3c44" /></Pic>
          <Clock>12:37</Clock>
        </Tray>
      </TaskBar>
    </Shell>
  );
}
